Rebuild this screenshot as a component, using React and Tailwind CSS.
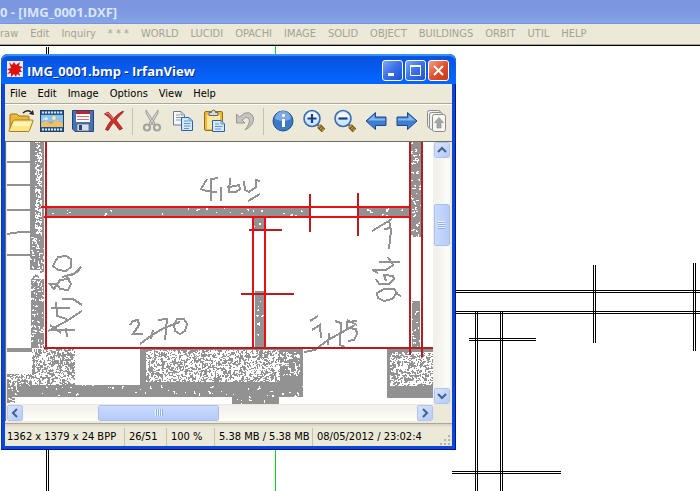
import React from "react";

const CAD_MENU = [
  "raw", "Edit", "Inquiry", "* * *", "WORLD", "LUCIDI", "OPACHI", "IMAGE",
  "SOLID", "OBJECT", "BUILDINGS", "ORBIT", "UTIL", "HELP",
];

const VIEWER_MENU = ["File", "Edit", "Image", "Options", "View", "Help"];

const STATUS = [
  { text: "1362 x 1379 x 24 BPP", className: "w-[119px]" },
  { text: "26/51", className: "w-[42px]" },
  { text: "100 %", className: "w-[48px]" },
  { text: "5.38 MB / 5.38 MB", className: "w-[98px]" },
];

// White flecks and short worms, like a photocopied hatch.
const flecks = (x, y, w, h, density, seed) => {
  let s = seed * 7919 + 17;
  const rnd = () => {
    s = (s * 1103515245 + 12345) % 2147483648;
    return s / 2147483648;
  };
  const count = Math.round((w * h * density) / 4);
  let d = "";
  for (let i = 0; i < count; i += 1) {
    let px = Math.floor(x + rnd() * w);
    let py = Math.floor(y + rnd() * h);
    const steps = 1 + Math.floor(rnd() * 5);
    for (let k = 0; k < steps; k += 1) {
      if (px >= x && px < x + w && py >= y && py < y + h) {
        d += `M${px} ${py}h1v1h-1z`;
      }
      if (rnd() < 0.5) px += rnd() < 0.5 ? 1 : -1;
      else py += rnd() < 0.5 ? 1 : -1;
    }
  }
  return d;
};

// x, y, width, height, density of the flecks
const WALLS = [
  [30, 142, 14, 94, 0],
  [30, 236, 14, 34, 0.3],
  [31, 279, 13, 69, 0.3],
  [47, 208, 263, 9, 0.04],
  [359, 208, 51, 9, 0.06],
  [411, 142, 11, 95, 0.2],
  [412, 301, 8, 47, 0.15],
  [254, 218, 11, 11, 0.05],
  [255, 291, 11, 57, 0.05],
  [32, 349, 43, 36, 1.1],
  [7, 374, 25, 12, 0.9],
  [7, 385, 296, 12, 0.06],
  [7, 397, 8, 6, 0.6],
  [140, 349, 163, 36, 0],
  [232, 396, 47, 8, 0.06],
  [387, 349, 46, 49, 0],
];

const EXTRA_FLECKS = [
  [35, 142, 7, 94, 1],
  [146, 350, 134, 32, 1.2],
  [280, 352, 20, 24, 0.5],
  [390, 352, 43, 34, 1.2],
];

const PEN = [
  // upper room width
  "M207 179L201 189L206 191L217 192M211 178V201M212 179L218 178M221 187V201M227 187h2",
  "M230 178L229 192L236 192L240 189L239 185L230 187M244 181L245 190L249 192L256 187V180L260 181M248 201L260 194",
  // left side
  "M55 262L58 257L66 256L71 259L71 267L66 271L58 270L53 266ZM62 277L69 275L74 274L81 267M65 276L70 279",
  "M49 283L54 289L60 280L68 279L71 284L68 290L60 289L57 284L50 284M72 275L80 270",
  "M62 299L73 299L82 305M51 308H70M56 302L57 316L67 319M48 331L65 322L82 311M50 325L61 333M51 330H75M66 328L67 337",
  // lower left
  "M130 325L133 321L138 320L139 325L133 334L143 334M153 330L151 339M140 344L152 335L164 328L180 322M158 320L167 319L165 340",
  "M177 319L184 319L187 324L185 331L180 334L175 331L174 325Z",
  // lower middle
  "M310 321L318 316M312 330L320 325L321 338M304 352L315 350L328 340L355 325M329 333L328 345M335 321L341 323L340 345L345 347",
  "M357 321L347 322L347 328L356 329L357 334L354 340L348 341M347 320L357 325",
  // right side
  "M372 231L382 225L392 219M389 220L391 231L389 249M384 229L391 228M379 262H400M388 257L393 265L386 270L372 270L378 273",
  "M376 279L379 284L389 284L394 279L393 276L384 275L386 281M377 293L384 289H394L397 293L392 299L384 301L378 298ZM397 294L401 296",
];

const Scan = () => (
  <svg className="block h-[262px] min-w-0 flex-1" viewBox="7 142 426 262" preserveAspectRatio="xMinYMin slice" shapeRendering="crispEdges" role="img" aria-label="Scanned floor plan">
    <rect x="7" y="142" width="426" height="262" fill="#fff" />
    {WALLS.map(([x, y, w, h]) => (
      <rect key={`${x}-${y}`} x={x} y={y} width={w} height={h} fill="#929292" />
    ))}
    {WALLS.map(([x, y, w, h, density], index) => (
      <path key={`${x}-${y}`} d={flecks(x, y, w, h, density, index + 1)} fill="#fff" />
    ))}
    {EXTRA_FLECKS.map(([x, y, w, h, density], index) => (
      <path key={`${x}-${y}`} d={flecks(x, y, w, h, density, index + 40)} fill="#fff" />
    ))}
    <path d="M7 162H30M7 185H30M7 210H30M7 234L20 232H30M7 255H30" stroke="#929292" strokeWidth="2" fill="none" />
    <path d="M7 350H32" stroke="#929292" strokeWidth="4" />
    <path d="M35 275l4 2M40 272l4-1M32 280l3-4" stroke="#929292" strokeWidth="2" />
    {PEN.map((d) => (
      <path key={d} d={d} fill="none" stroke="#929292" strokeWidth="2" />
    ))}
    <g fill="none" strokeWidth="2" stroke="#b81c20">
      <path d="M46 142V349M44 348H433M249 230H282M241 294H294M310 194V232M358 193V236M410 142V355M422 142V357" />
      <path stroke="#e81010" d="M41 207H410M44 217H410M253 217V348M265 217V348" />
    </g>
  </svg>
);

const FolderIcon = () => (
  <svg width="28" height="26" viewBox="0 0 28 26">
    <path d="M3 22V7q0-1 1-1h6l2 2h9q1 0 1 1v3" fill="#e9b93c" stroke="#a87410" />
    <path d="M2.500 23.500q-1 0-.5-1L6 13q.4-1 1.500-1H25q1.500 0 1 1L22.500 22.500q-.4 1-1.500 1z" fill="#fde58a" stroke="#b07c14" />
    <path d="M7 14h17l-2 4H5z" fill="#fff4b8" />
    <path d="M16 5q4-4 8-1" stroke="#222" strokeWidth="1.500" fill="none" />
    <path d="M22 6l5 1-1-5z" fill="#222" />
  </svg>
);

const FilmIcon = () => (
  <svg width="24" height="22" viewBox="0 0 24 22">
    <rect x=".5" y=".5" width="23" height="21" fill="#28568e" stroke="#1d3f6e" />
    <path d="M2 2.500h20M2 19.500h20" stroke="#d9e8fa" strokeWidth="2" strokeDasharray="2 1" />
    <rect x="1" y="5" width="22" height="12" fill="#8cc2f0" />
    <path d="M1 12h22v5H1z" fill="#d79a3c" />
    <path d="M1 13l5-2 5 3 6-4 6 3v4H1z" fill="#efbf66" />
    <path d="M3 9h5M5 8h2" stroke="#fff" />
    <circle cx="14" cy="8" r="2" fill="#ffe58b" />
  </svg>
);

const SaveIcon = () => (
  <svg width="22" height="22" viewBox="0 0 22 22">
    <path d="M.5.5h21v21H3l-2.500-2.500z" fill="#4472b4" stroke="#24457c" />
    <rect x="4" y="1" width="14" height="11" fill="#fff" />
    <path d="M4 1h14v3H4z" fill="#b92531" />
    <path d="M5 6.500h12M5 9.500h12" stroke="#d0727a" />
    <rect x="5" y="14" width="12" height="7" fill="#d9dde4" stroke="#5a6678" strokeWidth=".8" />
    <rect x="7" y="15" width="3" height="5" fill="#24457c" />
  </svg>
);

const DeleteIcon = () => (
  <svg width="22" height="22" viewBox="0 0 22 22">
    <path d="M1.500 4L5 2q3.500 3.500 5.500 6.500Q15 3.500 20 1q1 .5 0 1.500-4 3.500-7 7.500 3.500 4.500 6.500 8.500L16.500 20q-2.500-3.500-6-7.500-3 4-5.500 8l-2.500-1q2.500-5.500 6-9.500-3-3.500-7-6z" fill="#d0302c" stroke="#8f1a1a" strokeWidth=".8" />
    <path d="M3 4l2-1 5 6" stroke="#ef8a80" fill="none" />
  </svg>
);

const CutIcon = () => (
  <svg width="20" height="24" viewBox="0 0 20 24" fill="none">
    <path d="M4 1q-.5 3 1 5l6 10 2-2zM16 1q.5 3-1 5L9 16l-2-2z" fill="#d4d4d0" stroke="#8e8e8c" strokeWidth=".8" />
    <circle cx="5" cy="18.500" r="3" stroke="#a3a3a0" strokeWidth="2.200" />
    <circle cx="15" cy="18.500" r="3" stroke="#a3a3a0" strokeWidth="2.200" />
  </svg>
);

const CopyIcon = () => (
  <svg width="22" height="22" viewBox="0 0 22 22">
    <path d="M1.500 1.500H9L12.500 5v10h-11z" fill="#f5f8fc" stroke="#6e7888" />
    <path d="M9 1.500V5h3.500M4 5h4M4 7.500h6M4 10h5" stroke="#8e9aac" fill="none" />
    <path d="M9.500 7.500H17l3.500 3.500v9.500h-11z" fill="#d6e9fb" stroke="#2d62a8" />
    <path d="M17 7.500V11h3.500M12 11h4M12 13.500h6.500M12 16h6.500M12 18.500h5" stroke="#5f94d2" fill="none" />
  </svg>
);

const PasteIcon = () => (
  <svg width="24" height="24" viewBox="0 0 24 24">
    <rect x="2.500" y="2.500" width="18" height="19" rx="1.500" fill="#f0b93a" stroke="#9a6c12" />
    <rect x="5" y="6" width="13" height="14" fill="#ffe9a0" />
    <path d="M7 6.500V3.500h2.500q0-2.500 2-2.500t2 2.500H16v3z" fill="#d6dbe0" stroke="#606870" />
    <path d="M10.500 11.500H19l3.500 3.500v7.500h-12z" fill="#d6e9fb" stroke="#2d62a8" />
    <path d="M19 11.500V15h3.500M13 15h4M13 17.500h7.500M13 20h6" stroke="#5f94d2" fill="none" />
  </svg>
);

const UndoIcon = () => (
  <svg width="20" height="22" viewBox="0 0 20 22">
    <path d="M1.500 4v9H10L7 10q4-4 6.500-2 3 4-3.500 12 9-4.500 8.500-12Q16 .5 9 3.500L4.500 7z" fill="#c3c3bf" stroke="#979793" />
  </svg>
);

const InfoIcon = () => (
  <svg width="22" height="22" viewBox="0 0 22 22">
    <circle cx="11" cy="11" r="10" fill="#3d79c4" stroke="#1f4f94" />
    <path d="M3 9a8 8 0 0 1 16 0q-8 4-16 0z" fill="#79aae2" />
    <rect x="10" y="9" width="3" height="8" fill="#fff" />
    <rect x="10" y="4" width="3" height="3" rx="1" fill="#fff" />
  </svg>
);

const ZoomIcon = ({ plus }) => (
  <svg width="24" height="24" viewBox="0 0 24 24">
    <path d="M15 15l2 2" stroke="#777" strokeWidth="2.500" />
    <path d="M17 17l4.500 4.500" stroke="#6e4c10" strokeWidth="5" />
    <path d="M17 17l4.500 4.500" stroke="#c49a3c" strokeWidth="3" strokeDasharray="1.500 .8" />
    <circle cx="10" cy="9.500" r="8" fill="#cfe6fb" stroke="#3a6cb0" strokeWidth="1.600" />
    <path d="M4 9a6 6 0 0 1 12 0z" fill="#eff8ff" />
    <path d={plus ? "M5.500 9.500h9M10 5v9" : "M5.500 9.500h9"} stroke="#173f86" strokeWidth="2.200" />
  </svg>
);

const ArrowIcon = ({ right }) => (
  <svg width="22" height="20" viewBox="0 0 22 20" className={right ? "-scale-x-100" : ""}>
    <path d="M1 10L10.500 1.500V6H21v8.500H10.500V18.500z" fill="#3f7fd2" stroke="#1d4a8e" />
    <path d="M3 9.500l6.500-5.500v3.500H20v2z" fill="#86b8ee" />
  </svg>
);

const PagesIcon = () => (
  <svg width="20" height="24" viewBox="0 0 20 24">
    <rect x=".5" y="1.500" width="13" height="17" rx="2" fill="#f0f0ec" stroke="#8c8c88" />
    <rect x="2.500" y="3.500" width="13" height="17" rx="2" fill="#f0f0ec" stroke="#8c8c88" />
    <rect x="5.500" y="5.500" width="13" height="17" rx="2" fill="#f6f6f3" stroke="#8c8c88" />
    <path d="M12 8.500l4.500 5H14V19h-4v-5.500H7.500z" fill="#a6a6a2" stroke="#8c8c88" strokeWidth=".6" />
  </svg>
);

const SplatIcon = () => (
  <svg width="16" height="16" viewBox="0 0 16 16" aria-hidden="true">
    <rect width="16" height="16" fill="#e9eef6" />
    <path d="M2 1l3 3 2-3 2 3 4-3-1 4 4 1-3 2 2 3-3 0 1 4-3-2-1 3-2-3-3 3 0-4-4 1 3-3-3-2 4-1z" fill="#e01010" />
  </svg>
);

const TOOLS = [
  { label: "Open", icon: <FolderIcon /> },
  { label: "Slideshow", icon: <FilmIcon /> },
  { label: "Save", icon: <SaveIcon /> },
  { label: "Delete", icon: <DeleteIcon /> },
  null,
  { label: "Cut", icon: <CutIcon /> },
  { label: "Copy", icon: <CopyIcon /> },
  { label: "Paste", icon: <PasteIcon /> },
  { label: "Undo", icon: <UndoIcon /> },
  null,
  { label: "Information", icon: <InfoIcon /> },
  { label: "Zoom in", icon: <ZoomIcon plus /> },
  { label: "Zoom out", icon: <ZoomIcon /> },
  { label: "Previous", icon: <ArrowIcon /> },
  { label: "Next", icon: <ArrowIcon right /> },
  { label: "Previous page", icon: <PagesIcon /> },
];

const CaptionButton = ({ label, close, children }) => (
  <button
    type="button"
    aria-label={label}
    className={`flex h-[21px] w-[21px] items-center justify-center rounded-[3px] border border-white ${
      close ? "bg-linear-to-br from-[#f0a08c] via-[#e0502c] to-[#c43c14]" : "bg-linear-to-br from-[#7ea6f4] via-[#3a6eea] to-[#1f52cf]"
    }`}
  >
    <svg width="15" height="15" viewBox="0 0 15 15" fill="none" stroke="#fff">
      {children}
    </svg>
  </button>
);

const ScrollButton = ({ label, d }) => (
  <button
    type="button"
    aria-label={label}
    className="flex h-4 w-4 flex-none items-center justify-center rounded-[2px] border border-white bg-linear-to-br from-[#d8e4fe] to-[#b4caf8] outline -outline-offset-1 outline-[#b0c4ee]"
  >
    <svg width="10" height="10" viewBox="0 0 10 10" fill="none" stroke="#45608e" strokeWidth="2">
      <path d={d} />
    </svg>
  </button>
);

const Viewer = () => (
  <section className="absolute top-[8px] left-px w-[455px] rounded-t-[7px] bg-[#0848d8] px-1 pb-1 shadow-[inset_-1px_-1px_0_#00138c,inset_1px_0_0_#0831d9]">
    <header className="-mx-1 flex h-[30px] items-center gap-1 rounded-t-[7px] bg-linear-to-b from-[#0a4fd0] from-0% via-[#0855e6] via-25% to-[#0466ff] to-90% pr-[7px] pl-[6px] shadow-[inset_0_2px_1px_#3b94ff]">
      <SplatIcon />
      <h1 className="flex-1 pt-[3px] font-['Open_Sans',sans-serif] text-[13px] leading-4 font-bold whitespace-nowrap text-white [text-shadow:1px_1px_0_#0a2a80]">
        IMG_0001.bmp - IrfanView
      </h1>
      <div className="flex gap-[2px] pt-[2px]">
        <CaptionButton label="Minimize"><path d="M3 11.500h6" strokeWidth="3" /></CaptionButton>
        <CaptionButton label="Maximize"><path d="M2.500 4v8.500h10V4M2 3.500h11" /><path d="M2 3h11" strokeWidth="2" /></CaptionButton>
        <CaptionButton label="Close" close><path d="M3 3l9 9M12 3l-9 9" strokeWidth="2" /></CaptionButton>
      </div>
    </header>

    <div className="bg-[#ece9d8]">
      <nav className="flex h-5 items-center gap-px border-b border-[#aca899]">
        {VIEWER_MENU.map((item) => (
          <button key={item} type="button" className="px-[5px] leading-4">{item}</button>
        ))}
      </nav>

      <div className="flex h-[37px] items-center border-t border-white pb-1">
        {TOOLS.map((tool, index) =>
          tool ? (
            <button key={tool.label} type="button" aria-label={tool.label} className="flex h-8 w-[31px] flex-none items-center justify-center last:w-[29px]">
              {tool.icon}
            </button>
          ) : (
            <span key={index} className="mx-[3px] h-[27px] w-px flex-none bg-[#c5c2b0]" />
          )
        )}
      </div>

      <div className="border-t border-l border-[#6f6c60] pr-[2px] pl-px">
        <div className="flex">
          <Scan />
          <div className="flex w-[17px] flex-col items-center bg-linear-to-r from-[#f0efe8] to-[#fdfdfa]">
            <ScrollButton label="Scroll up" d="M1 7l4-4 4 4" />
            <div className="flex-[46]" />
            <div className="flex h-[42px] w-4 items-center justify-center rounded-[2px] border border-white bg-linear-to-r from-[#cbdafd] to-[#b6cbfa] outline -outline-offset-1 outline-[#a8bff0]">
              <span className="h-[8px] w-[7px] bg-[repeating-linear-gradient(#eef4fe_0_1px,#8cb0f8_1px_2px)]" />
            </div>
            <div className="flex-[142]" />
            <ScrollButton label="Scroll down" d="M1 3l4 4 4-4" />
          </div>
        </div>
        <div className="flex h-[17px] items-center">
          <div className="flex flex-1 items-center bg-linear-to-b from-[#f0efe8] to-[#fdfdfa]">
            <ScrollButton label="Scroll left" d="M7 1L3 5l4 4" />
            <div className="flex-[75]" />
            <div className="flex h-4 w-[121px] items-center justify-center rounded-[2px] border border-white bg-linear-to-b from-[#cbdafd] to-[#b6cbfa] outline -outline-offset-1 outline-[#a8bff0]">
              <span className="h-[7px] w-[8px] bg-[repeating-linear-gradient(90deg,#eef4fe_0_1px,#8cb0f8_1px_2px)]" />
            </div>
            <div className="flex-[198]" />
            <ScrollButton label="Scroll right" d="M3 1l4 4-4 4" />
          </div>
          <div className="w-[17px]" />
        </div>
      </div>

      <footer className="mt-[2px] flex h-[23px] items-center border-t border-[#aca899] pt-[3px] pl-px whitespace-nowrap shadow-[inset_0_2px_2px_#d8d4c2]">
        {STATUS.map((cell) => (
          <span key={cell.text} className={`flex-none border-r border-[#c5c2b0] py-px pl-px leading-4 ${cell.className} not-first:pl-1`}>
            {cell.text}
          </span>
        ))}
        <span className="flex-1 pl-1 leading-4">08/05/2012 / 23:02:4</span>
        <svg width="12" height="12" viewBox="0 0 12 12" className="self-end" aria-hidden="true">
          <path d="M8 1h2v2H8zM4 5h2v2H4zM8 5h2v2H8zM0 9h2v2H0zM4 9h2v2H4zM8 9h2v2H8z" fill="#b8b4a2" />
        </svg>
      </footer>
    </div>
  </section>
);

const CadLines = () => (
  <svg className="absolute inset-0 h-full w-full" shapeRendering="crispEdges" aria-hidden="true">
    <rect x="275" y="0" width="1" height="100%" fill="#10d020" />
    <g stroke="#000">
      <path d="M46.500 1V445M48.500 1V445" />
      <path d="M475.500 265V445M477.500 265V445M500.500 265V445M502.500 265V445" />
      <path d="M593.500 219V297M595.500 219V297M693.500 217V305M695.500 217V305" />
      <path d="M469 292.500H536M469 294.500H536M452 425.500H561M452 427.500H561" />
    </g>
    <g fill="#000">
      <rect x="450" y="244" width="100%" height="1" />
      <rect x="450" y="246" width="100%" height="1" />
      <rect x="450" y="265" width="100%" height="1" />
      <rect x="450" y="267" width="100%" height="1" />
    </g>
  </svg>
);

export default function App() {
  return (
    <div className="flex h-screen flex-col overflow-hidden bg-white font-['DejaVu_Sans_Condensed','Noto_Sans',sans-serif] text-[11px] text-black">
      <header className="flex h-6 flex-none items-center bg-linear-to-b from-[#7b96df] via-[#7d98e0] to-[#84a7ea] shadow-[inset_0_-1px_0_#7a95dc]">
        <h2 className="font-['Open_Sans',sans-serif] text-[13px] leading-4 font-bold whitespace-nowrap text-[#dbe6fa]">0 - [IMG_0001.DXF]</h2>
      </header>
      <nav className="flex h-[21px] flex-none items-center gap-3 border-b border-[#a8a598] bg-[#ece9d8] whitespace-nowrap text-[#a5a291]">
        {CAD_MENU.map((item) => (
          <button key={item} type="button" className="leading-4">{item}</button>
        ))}
      </nav>
      <main className="relative min-h-0 flex-1 border-t border-black">
        <CadLines />
        <Viewer />
      </main>
    </div>
  );
}
